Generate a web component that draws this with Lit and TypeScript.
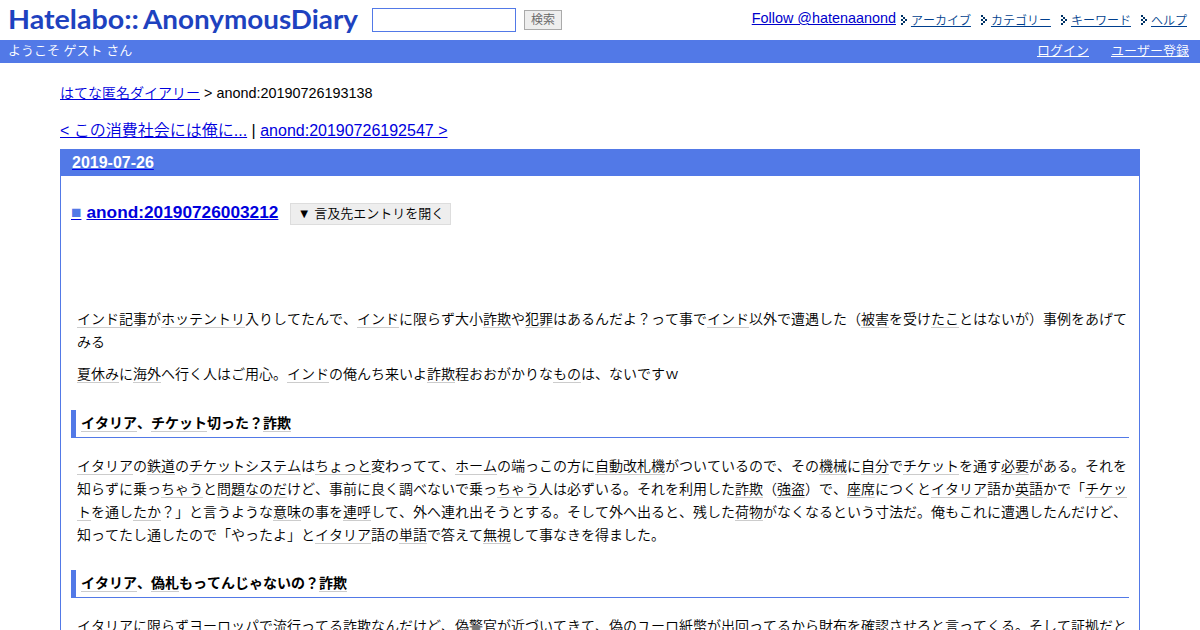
import { LitElement, css, html, svg } from "lit";
import { customElement, property } from "lit/decorators.js";

const NAV = ["アーカイブ", "カテゴリー", "キーワード", "ヘルプ"];

// [word] marks a keyword link
const ENTRY = [
    { type: "p", text: "[インド記事]が[ホッテントリ]入りしてたんで、[インド]に限らず大小[詐欺]や[犯罪]はあるんだよ？って事で[インド]以外で遭遇した（[被害]を受け[たこ]とはないが）事例をあげてみる" },
    { type: "p", text: "[夏休み]に[海外]へ行く人はご用心。[インド]の俺んち来いよ[詐欺]程おおがかりな[もの]は、ないですｗ" },
    { type: "h", text: "[イタリア]、[チケット]切った？[詐欺]" },
    { type: "p", text: "[イタリア]の[鉄道]の[チケット][システム]は[ちょっと]変わってて、[ホーム]の端っこの方に[自動改札機]がついているので、その[機械]に[自分]で[チケット]を通す[必要]がある。それを知らずに乗っ[ちゃう]と[問題][なのだ]けど、事前に良く調べないで乗っ[ちゃう]人は必ずいる。それを利用した[詐欺]（[強盗]）で、[座席]につくと[イタリア]語か[英語]かで「[チケット]を通し[たか]？」と言うような[意味]の事を[連呼]して、外へ連れ出そうとする。そして外へ出ると、残した[荷物]がなくなるという寸法だ。俺もこれに遭遇したんだけど、知ってたし通したので「やったよ」と[イタリア]語の[単語]で答えて[無視]して事なきを得ました。" },
    { type: "h", text: "[イタリア]、[偽札]もってんじゃないの？[詐欺]" },
    { type: "p", text: "[イタリア]に限らず[ヨーロッパ]で[流行]ってる[詐欺]なんだけど、[偽警官]が近づいてきて、偽の[ユーロ]紙幣が出回ってるから[財布]を[確認]させろと言ってくる。そして[証拠]だと" },
];

// dots of the small chevron, [x, y]
const ARROW = [[0, 0], [2, 2], [0, 4], [4, 4], [2, 6], [0, 8]];

@customElement("diary-header")
class DiaryHeader extends LitElement {
    static styles = css`
        :host {
            display: block;
        }
        .top {
            display: flex;
            height: 40px;
            box-sizing: border-box;
            padding-right: 13px;
        }
        .logo {
            display: block;
            width: 372px;
            height: 40px;
            fill: #1e42bf;
            font-family: "Lato", sans-serif;
            font-weight: 700;
            font-size: 27px;
        }
        .search {
            display: flex;
            align-items: flex-start;
            gap: 8px;
            padding-top: 8px;
        }
        input {
            width: 144px;
            height: 24px;
            box-sizing: border-box;
            border: 1px solid #5279e7;
            background: #fff;
            margin: 0;
        }
        .search button {
            margin: 2px 0 0;
            padding: 0;
            width: 38px;
            height: 20px;
            border: 1px solid #aaa;
            background: #eee;
            color: #666;
            font: 350 12px/16px "Liberation Sans", "Noto Sans CJK JP", sans-serif;
        }
        .nav {
            display: flex;
            margin-left: auto;
            font-size: 12px;
            line-height: 16px;
            padding-top: 13px;
            font-kerning: none;
        }
        .follow {
            font-size: 14.4px;
            margin: -3px 5px 0 0;
            color: #0000cc;
            font-kerning: auto;
        }
        .item {
            display: flex;
            gap: 4px;
            margin-right: 10px;
        }
        .item:last-child {
            margin-right: 0;
        }
        .item a {
            color: #003f8e;
        }
        .arrow {
            width: 6px;
            height: 10px;
            margin-top: 2px;
            fill: #003366;
        }
        .bar {
            display: flex;
            gap: 22px;
            height: 23px;
            padding: 0 11px 0 8px;
            background: #5279e7;
            color: #fff;
            font-size: 13px;
            line-height: 22px;
            font-kerning: none;
        }
        .bar a {
            color: #fff;
        }
        .welcome {
            margin-right: auto;
        }
    `;

    render() {
        return html`
            <div class="top">
                <svg class="logo" viewBox="0 0 372 40">
                    <text x="8" y="29" textLength="131" lengthAdjust="spacingAndGlyphs">Hatelabo::</text>
                    <text x="143" y="29" textLength="215" lengthAdjust="spacingAndGlyphs">AnonymousDiary</text>
                </svg>
                <div class="search">
                    <input type="text">
                    <button>検索</button>
                </div>
                <div class="nav">
                    <a class="follow" href="#">Follow @hatenaanond</a>
                    ${NAV.map((name) => html`
                        <span class="item">
                            <svg class="arrow" viewBox="0 0 6 10">
                                ${ARROW.map(([x, y]) => svg`<rect x=${x} y=${y} width="2" height="2"></rect>`)}
                            </svg>
                            <a href="#">${name}</a>
                        </span>
                    `)}
                </div>
            </div>
            <div class="bar">
                <span class="welcome">ようこそ ゲスト さん</span>
                <a href="#">ログイン</a>
                <a href="#">ユーザー登録</a>
            </div>
        `;
    }
}

@customElement("diary-entry")
class DiaryEntry extends LitElement {
    static styles = css`
        :host {
            display: block;
            border: 1px solid #5279e7;
            border-top: 0;
        }
        .date {
            margin: 0 -1px;
            padding-left: 12px;
            height: 27px;
            background: #5279e7;
            font-size: 16px;
            line-height: 27px;
        }
        .date a {
            color: #0000ee;
        }
        .date b {
            color: #fff;
            font-weight: 700;
        }
        .body {
            padding: 0 10px;
        }
        .title {
            display: flex;
            align-items: center;
            margin: 24px 0 0;
            height: 24px;
            font-size: 17.28px;
            line-height: 24px;
        }
        .title a {
            color: #0000dd;
        }
        .title .mark {
            color: #5279e7;
            text-decoration-color: #0000dd;
            margin-right: 5px;
        }
        .title button {
            margin: 4px 0 0 12px;
            padding: 0;
            width: 161px;
            height: 22px;
            border: 1px solid #ddd;
            background: #eee;
            color: #000;
            font: 350 13px/20px "Liberation Sans", "Noto Sans CJK JP", sans-serif;
        }
        .text {
            padding-top: 84px;
            font-size: 14px;
            line-height: 23px;
            font-kerning: none;
        }
        p {
            margin: 0 2px 9px 6px;
        }
        h4 {
            margin: 23.6px 0 17px;
            height: 27px;
            border-left: 5px solid #5279e7;
            border-bottom: 1px solid #5279e7;
            padding-left: 5px;
            font-size: 14px;
            line-height: 27px;
        }
        .keyword {
            color: inherit;
            text-decoration: none;
            border-bottom: 1px solid #ccc;
        }
    `;

    @property() date = "";
    @property() name = "";
    @property({ type: Array }) blocks: { type: string; text: string }[] = [];

    keywords(text: string) {
        return text.split(/(\[.+?\])/).map((part) =>
            part.startsWith("[") ? html`<a class="keyword">${part.slice(1, -1)}</a>` : part
        );
    }

    render() {
        return html`
            <div class="date"><a href="#"><b>${this.date}</b></a></div>
            <div class="body">
                <h3 class="title">
                    <a class="mark" href="#">■</a>
                    <a href="#">${this.name}</a>
                    <button>▼ 言及先エントリを開く</button>
                </h3>
                <div class="text">
                    ${this.blocks.map((block) =>
                        block.type === "h"
                            ? html`<h4>${this.keywords(block.text)}</h4>`
                            : html`<p>${this.keywords(block.text)}</p>`
                    )}
                </div>
            </div>
        `;
    }
}

@customElement("app-root")
class AppRoot extends LitElement {
    static styles = css`
        :host {
            display: block;
            height: 630px;
            overflow: hidden;
            background: #fff;
            color: #000;
            font-family: "Liberation Sans", "Noto Sans CJK JP", sans-serif;
            font-weight: 350;
        }
        .page {
            padding: 20px 60px 0;
        }
        a {
            color: #0000dd;
        }
        .crumbs {
            font-size: 14.4px;
            line-height: 20px;
        }
        .crumbs a {
            font-size: 14px;
        }
        .pager {
            font-size: 16px;
            line-height: 24px;
            margin: 16px 0 6px;
        }
    `;

    render() {
        return html`
            <diary-header></diary-header>
            <div class="page">
                <div class="crumbs"><a href="#">はてな匿名ダイアリー</a> &gt; anond:20190726193138</div>
                <div class="pager"><a href="#">&lt; この消費社会には俺に...</a> | <a href="#">anond:20190726192547 &gt;</a></div>
                <diary-entry date="2019-07-26" name="anond:20190726003212" .blocks=${ENTRY}></diary-entry>
            </div>
        `;
    }
}
